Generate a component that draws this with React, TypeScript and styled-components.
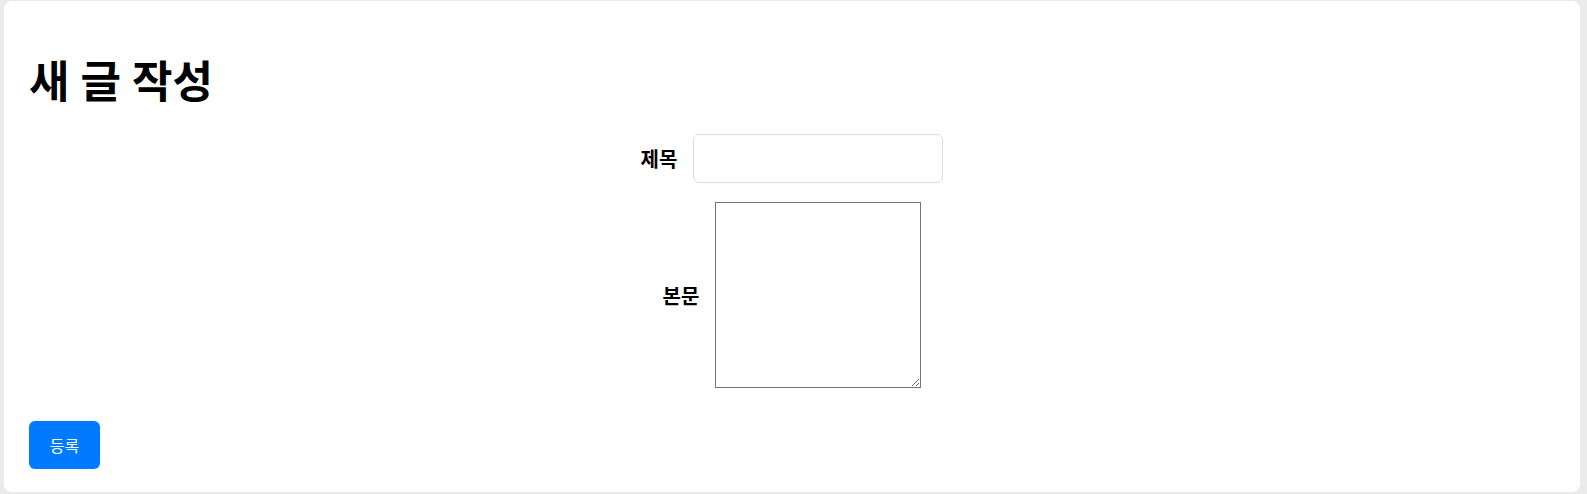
import React from "react";
import styled, { createGlobalStyle } from "styled-components";

const Global = createGlobalStyle`
  html, body { margin: 0; padding: 0; }
  body {
    background: #ebebeb;
    font-family: "Noto Sans CJK KR", "Noto Sans", sans-serif;
  }
  #root { padding: 1px 7px 2px 4px; }
`;

const Card = styled.div`
  background: #ffffff;
  border-radius: 8px;
  height: 491px;
  box-sizing: border-box;
  padding: 48px 25px 0 25px;
  display: flex;
  flex-direction: column;
`;

const Title = styled.h1`
  margin: 0 0 25px 0;
  font-size: 44px;
  line-height: 60px;
  font-weight: 700;
  color: #000;
  word-spacing: 1px;
`;

const Form = styled.form`
  display: flex;
  flex-direction: column;
  align-items: center;
  gap: 19px;
`;

const Row = styled.div`
  display: flex;
  align-items: center;
  gap: 16px;
`;

const Label = styled.label`
  font-size: 20px;
  font-weight: 700;
  color: #000;
`;

const Input = styled.input`
  width: 250px;
  height: 49px;
  box-sizing: border-box;
  border: 1px solid #dddddd;
  border-radius: 6px;
  padding: 0 10px;
  font-size: 16px;
  outline: none;
`;

const TextArea = styled.textarea`
  width: 206px;
  height: 186px;
  box-sizing: border-box;
  border: 1px solid #767676;
  border-radius: 0;
  font-family: inherit;
  font-size: 14px;
  outline: none;
`;

const Footer = styled.div`
  margin-top: 33px;
`;

const Button = styled.button`
  width: 71px;
  height: 48px;
  background: #007bff;
  color: #fff;
  border: none;
  border-radius: 6px;
  font-family: inherit;
  font-size: 16px;
  cursor: pointer;
`;

export default function App() {
  return (
    <>
      <Global />
      <Card>
        <Title>새 글 작성</Title>
        <Form onSubmit={(e) => e.preventDefault()}>
          <Row>
            <Label htmlFor="title">제목</Label>
            <Input id="title" type="text" />
          </Row>
          <Row>
            <Label htmlFor="body">본문</Label>
            <TextArea id="body" />
          </Row>
        </Form>
        <Footer>
          <Button type="button">등록</Button>
        </Footer>
      </Card>
    </>
  );
}
